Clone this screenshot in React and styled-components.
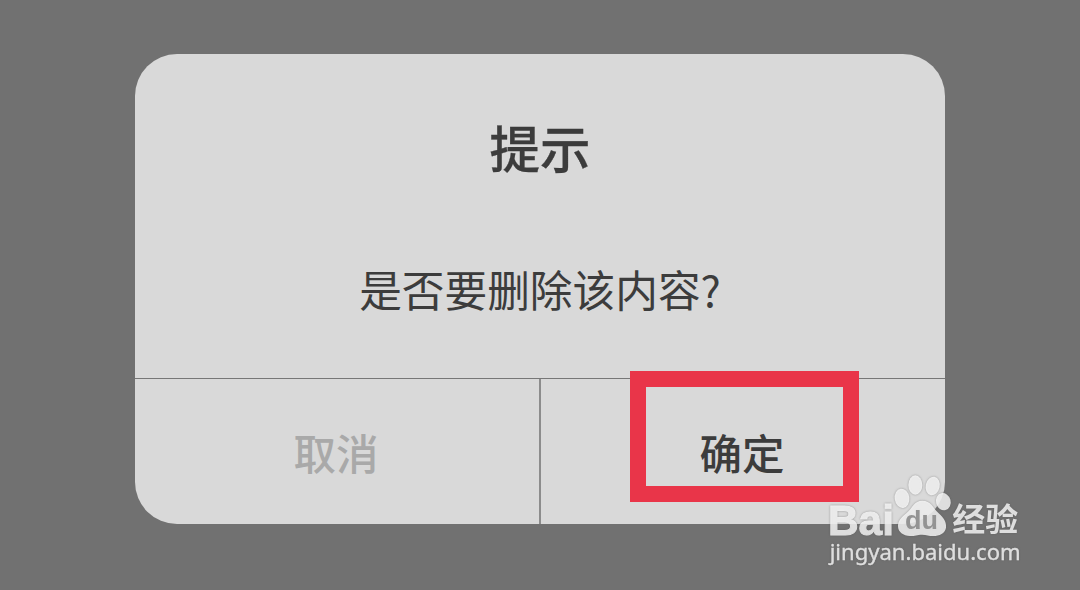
import React from "react";
import styled, { createGlobalStyle } from "styled-components";

const GlobalStyle = createGlobalStyle`
  * { box-sizing: border-box; }
  body {
    margin: 0;
    background: #717171;
    font-family: "Noto Sans CJK SC", sans-serif;
  }
`;

const Screen = styled.main`
  position: relative;
  width: 1080px;
  height: 590px;
  padding-top: 53.5px;
  overflow: hidden;
  background: #717171;
`;

const Dialog = styled.section`
  display: flex;
  flex-direction: column;
  width: 810px;
  height: 470.5px;
  margin: 0 auto;
  border-radius: 42px;
  background: #d9d9d9;
  color: #3c3c3c;
  overflow: hidden;
`;

const Content = styled.div`
  flex: 1;
  display: flex;
  flex-direction: column;
  align-items: center;
`;

const Title = styled.h1`
  margin: 56px 0 0;
  font-size: 50.5px;
  line-height: 72px;
  font-weight: 500;
  -webkit-text-stroke: 0.3px currentColor;
`;

const Message = styled.p`
  margin: 75px 0 0;
  font-size: 42.7px;
  line-height: 62px;
  font-weight: 400;
`;

const Actions = styled.footer`
  display: flex;
  height: 146.5px;
  border-top: 1.5px solid #777;
`;

const Action = styled.button`
  flex: 1;
  padding: 2px 2px 0 0;
  border: 0;
  border-left: ${({ $divided }) => ($divided ? "2px solid #8c8c8c" : "0")};
  background: transparent;
  color: ${({ $muted }) => ($muted ? "#a9a9a9" : "#3c3c3c")};
  font-family: inherit;
  font-size: 42.5px;
  line-height: 60px;
  font-weight: 500;
`;

const Highlight = styled.div`
  position: absolute;
  left: 630px;
  top: 371px;
  width: 229px;
  height: 131px;
  border: 16px solid #e93549;
`;

const Watermark = styled.svg`
  position: absolute;
  left: 810px;
  top: 460px;
  filter: drop-shadow(0 0 1px rgba(80, 80, 80, 0.6));
`;

const BrandText = styled.text`
  font-family: "Liberation Sans", Arial, sans-serif;
  font-weight: 700;
`;

const ChineseText = styled.text`
  font-family: "Noto Sans CJK SC", sans-serif;
  font-weight: 700;
`;

const UrlText = styled.text`
  font-family: "Noto Sans", sans-serif;
  font-weight: 400;
`;

function BaiduWatermark() {
  return (
    <Watermark width="230" height="120" viewBox="0 0 690 360">
      <g fill="#fff" opacity="0.79">
        <BrandText x="54" y="224" fontSize="130" textLength="198" lengthAdjust="spacingAndGlyphs" stroke="#fff" strokeWidth="3">Bai</BrandText>
        <ellipse cx="276" cy="115" rx="22" ry="29" transform="rotate(-8 276 115)" />
        <ellipse cx="316" cy="75" rx="21" ry="29" />
        <ellipse cx="368" cy="78" rx="21" ry="28" transform="rotate(12 368 78)" />
        <ellipse cx="400" cy="125" rx="22" ry="26" transform="rotate(-15 400 125)" />
        <path d="M337 122C363 122 369 144 386 160C402 174 410 188 408 203C405 220 388 228 370 228C356 228 350 224 336 224C321 224 316 228 300 228C280 228 264 216 264 199C264 182 274 173 289 160C308 144 312 122 337 122Z" />
        <ChineseText transform="translate(427 213) scale(1.03 1)" fontSize="96">经验</ChineseText>
        <UrlText x="59" y="300" fontSize="65" textLength="573" lengthAdjust="spacingAndGlyphs" stroke="#fff" strokeWidth="1">jingyan.baidu.com</UrlText>
      </g>
      <BrandText x="285" y="208" fontSize="80" textLength="99" lengthAdjust="spacingAndGlyphs" fill="#939393">du</BrandText>
    </Watermark>
  );
}

export default function App() {
  return (
    <>
      <GlobalStyle />
      <Screen>
        <Dialog role="dialog">
          <Content>
            <Title>提示</Title>
            <Message>是否要删除该内容?</Message>
          </Content>
          <Actions>
            <Action $muted>取消</Action>
            <Action $divided>确定</Action>
          </Actions>
        </Dialog>
        <Highlight />
        <BaiduWatermark />
      </Screen>
    </>
  );
}
